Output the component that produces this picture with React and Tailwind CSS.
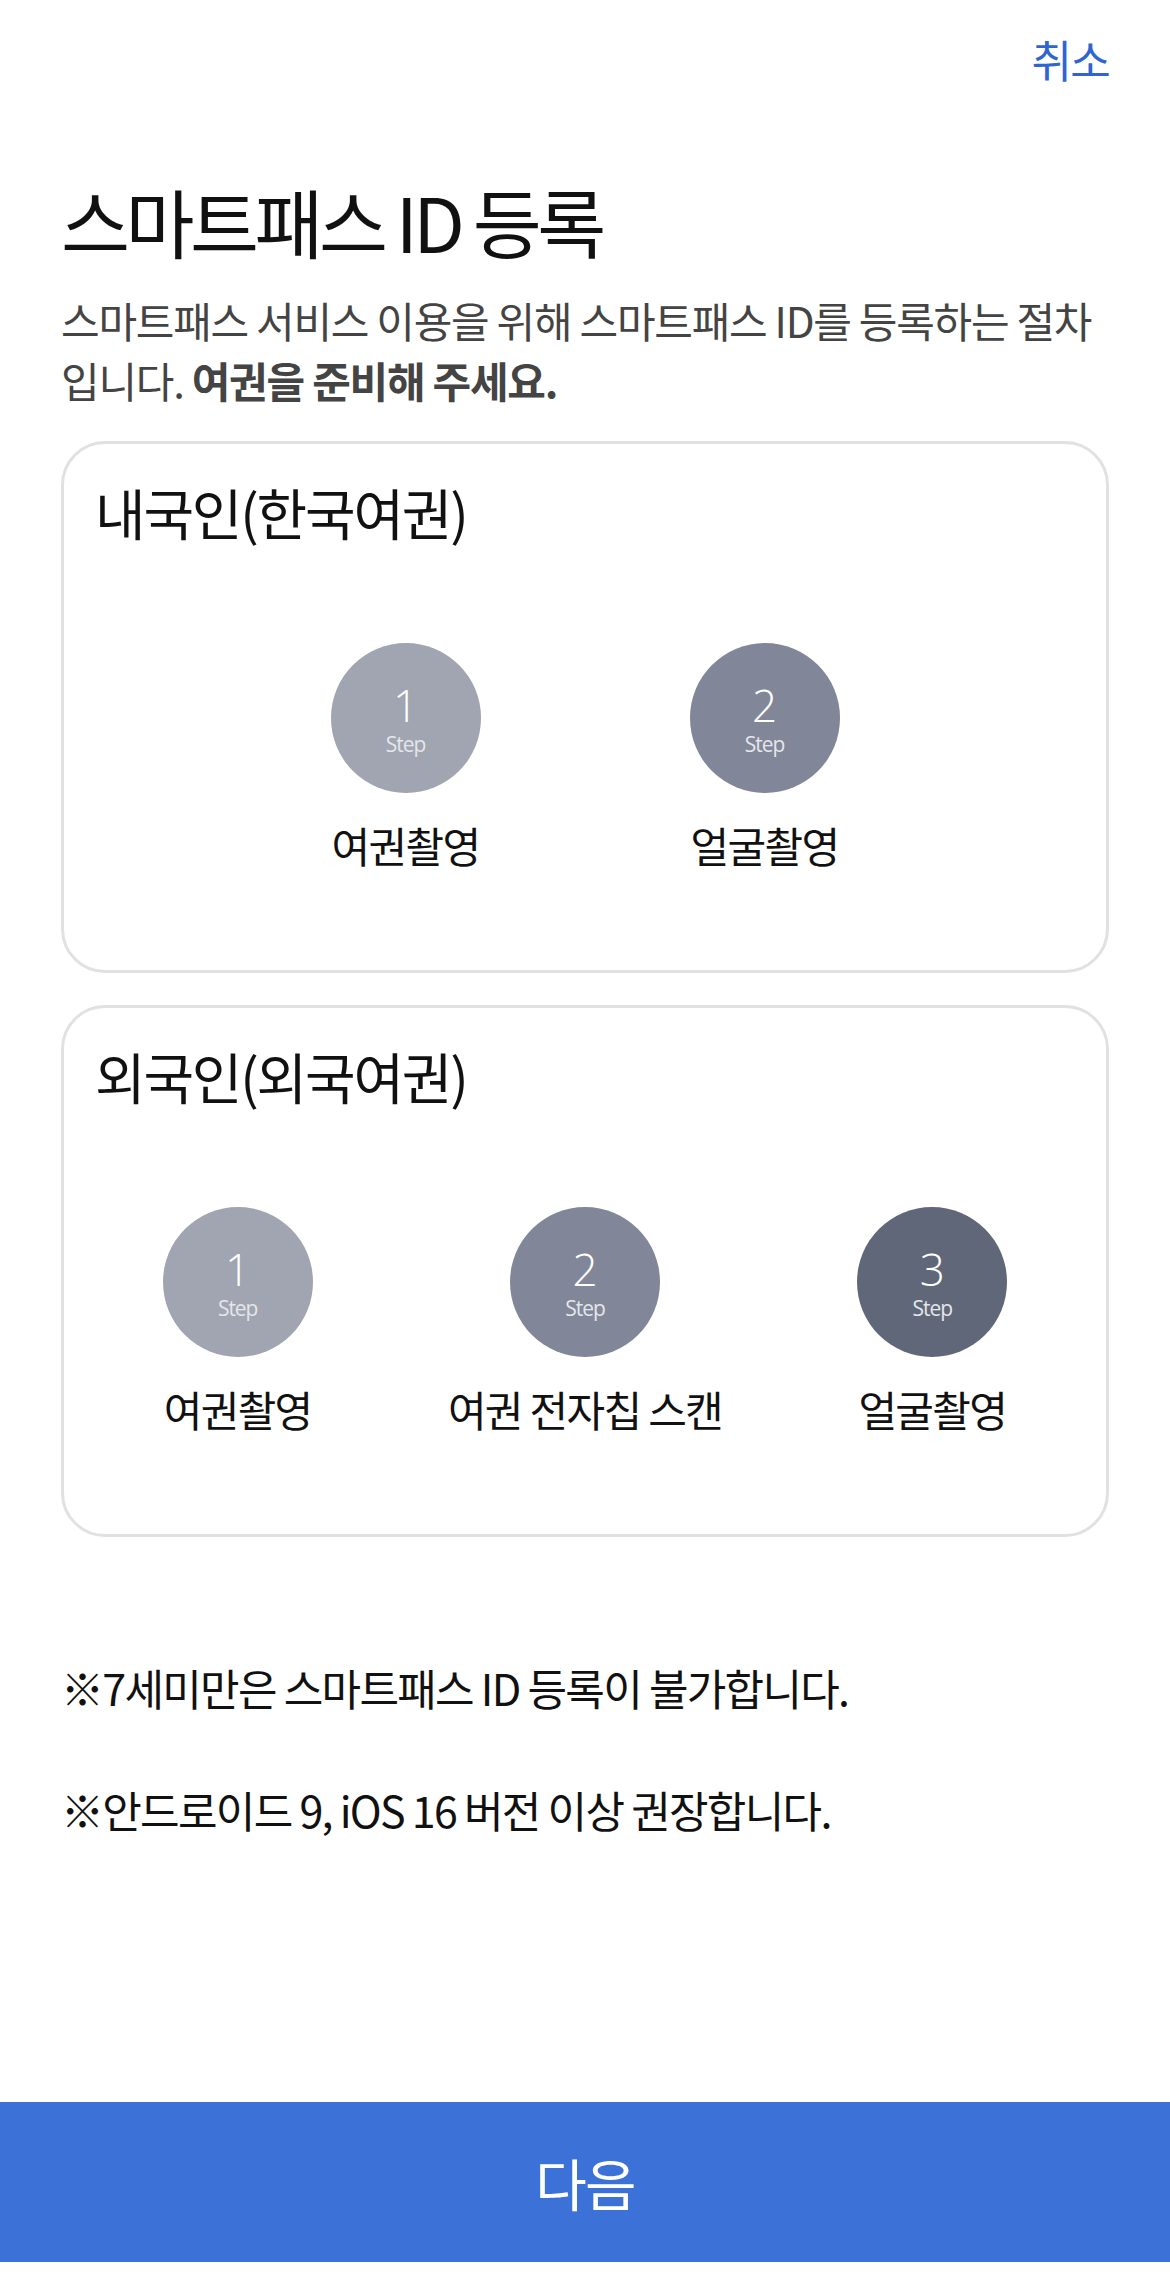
import React from 'react';

const STEP_COLORS = ['bg-[#a1a4b1]', 'bg-[#818698]', 'bg-[#606779]'];

const StepItem = ({ num, label, className }) => (
  <div className={`flex flex-col items-center ${className || ''}`}>
    <div className={`w-[150px] h-[150px] pt-[5px] rounded-full flex flex-col items-center justify-center text-white ${STEP_COLORS[num - 1]}`}>
      <span className="text-[44px] leading-[40px] font-['Open_Sans',sans-serif] font-light">{num}</span>
      <span className="mt-[7px] text-[21px] leading-[24px] tracking-[-0.05em] font-['Open_Sans',sans-serif] text-[#e4e6eb]">Step</span>
    </div>
    <p className="mt-[26px] text-[42px] leading-[52px] tracking-[-0.04em] text-[#111] whitespace-nowrap">{label}</p>
  </div>
);

const Card = ({ title, children }) => (
  <div className="mx-[61px] h-[532px] border-[3px] border-[#e1e1e1] rounded-[44px] bg-white">
    <h2 className="pl-[31px] pt-[37px] text-[55px] leading-[60px] tracking-[-0.04em] text-[#111]">{title}</h2>
    <div className="mt-[102px]">{children}</div>
  </div>
);

export default function App() {
  return (
    <div className="min-h-[2294px] bg-white flex flex-col font-['Noto_Sans_CJK_KR','Noto_Sans',sans-serif]">
      {/* Header */}
      <div className="flex justify-end px-[61px] pt-[34px]">
        <button className="text-[44px] leading-[50px] tracking-[-0.04em] text-[#2e65d1]">취소</button>
      </div>

      <h1 className="mt-[96px] px-[61px] text-[75px] leading-[82px] tracking-[-0.06em] text-[#111]">스마트패스 ID 등록</h1>

      <p className="mt-[28px] px-[61px] text-[42px] leading-[60px] tracking-[-0.03em] text-[#444]">
        스마트패스 서비스 이용을 위해 스마트패스 ID를 등록하는 절차
        <br />
        입니다. <span className="font-bold">여권을 준비해 주세요.</span>
      </p>

      <div className="mt-[31px] flex flex-col gap-[32px]">
        <Card title="내국인(한국여권)">
          <div className="flex justify-center">
            <StepItem num={1} label="여권촬영" className="w-[359px]" />
            <StepItem num={2} label="얼굴촬영" className="w-[359px]" />
          </div>
        </Card>

        <Card title="외국인(외국여권)">
          <div className="grid grid-cols-3">
            <StepItem num={1} label="여권촬영" />
            <StepItem num={2} label="여권 전자칩 스캔" />
            <StepItem num={3} label="얼굴촬영" />
          </div>
        </Card>
      </div>

      {/* Notice */}
      <div className="mt-[124px] px-[61px] flex flex-col gap-[70px] text-[43px] leading-[52px] tracking-[-0.04em] text-[#111]">
        <p>※7세미만은 스마트패스 ID 등록이 불가합니다.</p>
        <p>※안드로이드 9, iOS 16 버전 이상 권장합니다.</p>
      </div>

      <div className="mt-auto mb-[32px]">
        <button className="w-full h-[160px] bg-[#3c72d8] text-white text-[56px] tracking-[-0.03em]">다음</button>
      </div>
    </div>
  );
}
